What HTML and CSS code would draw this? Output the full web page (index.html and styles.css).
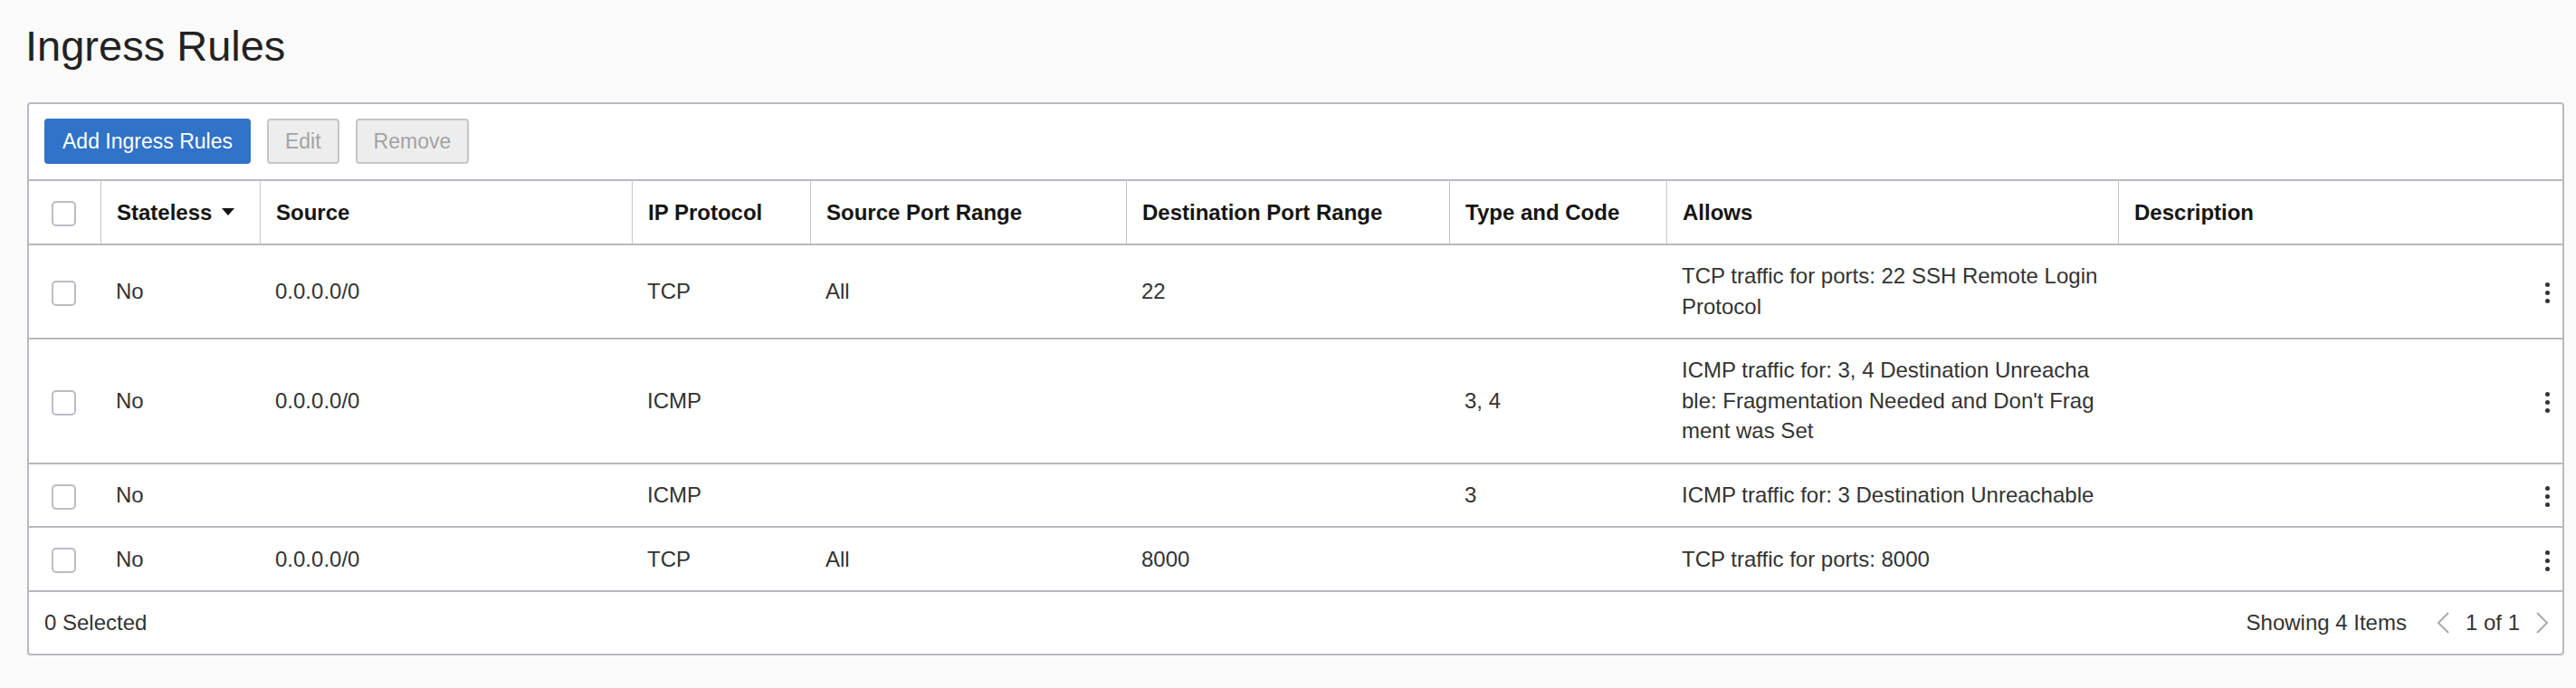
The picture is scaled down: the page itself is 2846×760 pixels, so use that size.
FILE: index.html
```html
<!DOCTYPE html>
<html lang="en">
<head>
<meta charset="utf-8">
<title>Ingress Rules</title>
<link rel="stylesheet" href="styles.css">
</head>
<body>
<div class="page">
  <h1 class="title">Ingress Rules</h1>
  <section class="panel">
    <div class="toolbar">
      <button class="btn btn-primary" type="button">Add Ingress Rules</button>
      <button class="btn" type="button" disabled>Edit</button>
      <button class="btn" type="button" disabled>Remove</button>
    </div>
    <table class="rules">
      <colgroup>
        <col class="w-check"><col class="w-stateless"><col class="w-source"><col class="w-proto">
        <col class="w-sport"><col class="w-dport"><col class="w-type"><col class="w-allows">
        <col class="w-desc"><col class="w-actions">
      </colgroup>
      <thead>
        <tr>
          <th class="c-check"><span class="checkbox"></span></th>
          <th class="ruled">Stateless<span class="sort"></span></th>
          <th class="ruled">Source</th>
          <th class="ruled">IP Protocol</th>
          <th class="ruled">Source Port Range</th>
          <th class="ruled">Destination Port Range</th>
          <th class="ruled">Type and Code</th>
          <th class="ruled">Allows</th>
          <th class="ruled">Description</th>
          <th class="c-actions"></th>
        </tr>
      </thead>
      <tbody>
        <tr>
          <td class="c-check"><span class="checkbox"></span></td>
          <td>No</td>
          <td>0.0.0.0/0</td>
          <td>TCP</td>
          <td>All</td>
          <td>22</td>
          <td></td>
          <td class="allows">TCP traffic for ports: 22 SSH Remote Login<br>Protocol</td>
          <td></td>
          <td class="c-actions"><span class="kebab"><i></i><i></i><i></i></span></td>
        </tr>
        <tr>
          <td class="c-check"><span class="checkbox"></span></td>
          <td>No</td>
          <td>0.0.0.0/0</td>
          <td>ICMP</td>
          <td></td>
          <td></td>
          <td>3, 4</td>
          <td class="allows">ICMP traffic for: 3, 4 Destination Unreacha<br>ble: Fragmentation Needed and Don't Frag<br>ment was Set</td>
          <td></td>
          <td class="c-actions"><span class="kebab"><i></i><i></i><i></i></span></td>
        </tr>
        <tr>
          <td class="c-check"><span class="checkbox"></span></td>
          <td>No</td>
          <td></td>
          <td>ICMP</td>
          <td></td>
          <td></td>
          <td>3</td>
          <td class="allows">ICMP traffic for: 3 Destination Unreachable</td>
          <td></td>
          <td class="c-actions"><span class="kebab"><i></i><i></i><i></i></span></td>
        </tr>
        <tr>
          <td class="c-check"><span class="checkbox"></span></td>
          <td>No</td>
          <td>0.0.0.0/0</td>
          <td>TCP</td>
          <td>All</td>
          <td>8000</td>
          <td></td>
          <td class="allows">TCP traffic for ports: 8000</td>
          <td></td>
          <td class="c-actions"><span class="kebab"><i></i><i></i><i></i></span></td>
        </tr>
      </tbody>
    </table>
    <div class="footer">
      <span class="selected">0 Selected</span>
      <div class="pager">
        <span class="count">Showing 4 Items</span>
        <svg class="chev" width="16" height="24" viewBox="0 0 16 24"><polyline points="14,1 3,12 14,23" fill="none" stroke="#ababab" stroke-width="2"/></svg>
        <span class="pages">1 of 1</span>
        <svg class="chev" width="16" height="24" viewBox="0 0 16 24"><polyline points="2,1 13,12 2,23" fill="none" stroke="#ababab" stroke-width="2"/></svg>
      </div>
    </div>
  </section>
</div>
</body>
</html>
```

FILE: styles.css
```css
* { box-sizing: border-box; }

html, body {
  margin: 0;
  background: #fafafa;
  font-family: "Liberation Sans", Arial, Helvetica, sans-serif;
  color: #333;
}

.page {
  padding: 23px 13px 0 30px;
}

.title {
  margin: 0 0 34px -2px;
  font-size: 47px;
  line-height: 56px;
  font-weight: 400;
  color: #222;
}

.panel {
  width: 2803px;
  background: #fff;
  border: 2px solid #b6babf;
  border-radius: 4px;
}

.toolbar {
  display: flex;
  gap: 18px;
  padding: 16px 17px 17px;
}

.btn {
  height: 50px;
  padding: 0 18px;
  font-family: inherit;
  font-size: 23px;
  border-radius: 4px;
  border: 2px solid #c3c6c9;
  background: #ededed;
  color: #a3a3a3;
}

.btn-primary {
  background: #3073c8;
  border-color: #3073c8;
  color: #fff;
}

.rules {
  width: 100%;
  table-layout: fixed;
  border-collapse: separate;
  border-spacing: 0;
  font-size: 24px;
  line-height: 1.4;
}

.w-check { width: 79px; }
.w-stateless { width: 176px; }
.w-source { width: 411px; }
.w-proto { width: 197px; }
.w-sport { width: 349px; }
.w-dport { width: 357px; }
.w-type { width: 240px; }
.w-allows { width: 499px; }
.w-desc { width: 450px; }
.w-actions { width: 41px; }

.rules th,
.rules td {
  border-top: 2px solid #b6babf;
  padding: 17.5px 17px;
  text-align: left;
  vertical-align: middle;
}

.rules th {
  font-weight: 700;
  color: #161513;
}

.rules th.ruled {
  border-left: 1px solid #c4c7cb;
}

.rules td {
  color: #333;
}

.rules .c-check {
  padding: 0;
  text-align: center;
}

.rules .c-actions {
  padding: 0 14px 0 0;
  text-align: right;
}

.allows {
  white-space: nowrap;
}

.checkbox {
  display: inline-block;
  width: 27px;
  height: 28px;
  border: 2px solid #b9bdc3;
  border-radius: 5px;
  background: #fff;
  vertical-align: middle;
  margin-right: 2px;
}

.sort {
  display: inline-block;
  margin-left: 11px;
  width: 0;
  height: 0;
  border-left: 7px solid transparent;
  border-right: 7px solid transparent;
  border-top: 8px solid #161513;
  vertical-align: middle;
  position: relative;
  top: -2px;
}

.kebab {
  display: inline-flex;
  flex-direction: column;
  gap: 4px;
  vertical-align: middle;
}

.kebab i {
  display: block;
  width: 5px;
  height: 5px;
  border-radius: 50%;
  background: #333;
}

.footer {
  display: flex;
  align-items: center;
  justify-content: space-between;
  height: 70px;
  border-top: 2px solid #b6babf;
  padding: 0 14px 0 17px;
  font-size: 24px;
  color: #333;
}

.pager {
  display: flex;
  align-items: center;
}

.count {
  margin-right: 32px;
}

.pages {
  margin: 0 17px;
}

.chev {
  display: block;
}
```
